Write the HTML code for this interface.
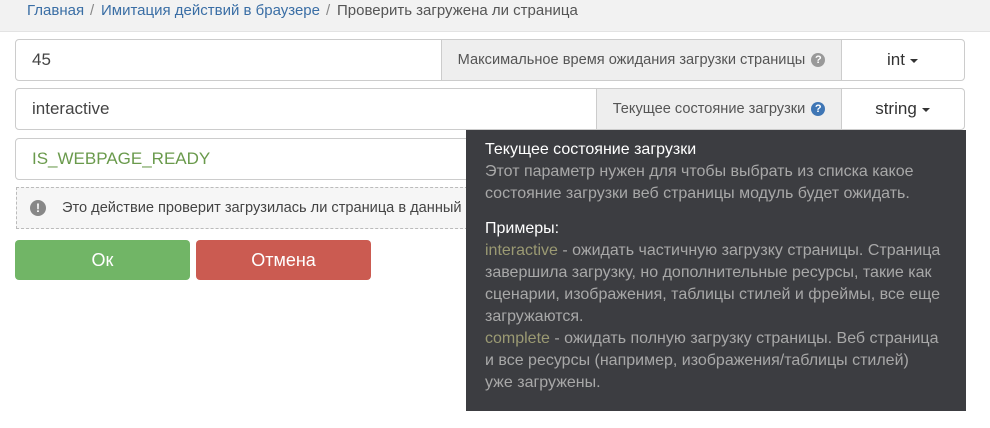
<!DOCTYPE html>
<html><head><meta charset="utf-8"><style>
body{margin:0;width:990px;height:428px;background:#fff;font-family:"Liberation Sans",Arial,sans-serif;position:relative;overflow:hidden;color:#333}
.bc{position:absolute;left:0;top:0;width:990px;height:31px;background:#f2f2f2;border-bottom:1px solid #e3e3e3;font-size:15px;line-height:22px}
.bc span{position:absolute;top:0}
.a{color:#3a6ea5}
.row{position:absolute;left:15px;width:948px;height:40px;border:1px solid #ccc;border-radius:4px;background:#fff}
.val{position:absolute;left:16px;top:0;line-height:40px;font-size:17px;color:#444}
.lab{position:absolute;top:0;height:40px;background:#eee;border-left:1px solid #ccc;border-right:1px solid #ccc;font-size:14.6px;line-height:40px;color:#555;text-align:center}
.typ{position:absolute;right:0;top:0;width:123px;height:40px;line-height:40px;text-align:center;font-size:17px;color:#333}
.caret{display:inline-block;width:0;height:0;border-left:4px solid transparent;border-right:4px solid transparent;border-top:4px solid #333;vertical-align:middle;margin-left:5px}
.q{display:inline-block;width:14px;height:14px;border-radius:50%;color:#fff;font-size:11px;line-height:14px;font-weight:bold;text-align:center;vertical-align:middle;margin-left:6px}
.info{position:absolute;left:16px;top:187px;width:460px;height:40px;border:1px dashed #bbb;background:#f6f6f6;font-size:14.6px;line-height:40px;color:#444;overflow:hidden}
.btn{position:absolute;top:240px;width:175px;height:40px;border-radius:4px;color:#fff;font-size:18px;line-height:40px;text-align:center}
.tip{position:absolute;left:466px;top:130px;width:500px;height:281px;background:#3c3d41;font-size:16px;line-height:22px;color:#a8a8a8;box-sizing:border-box;padding:9px 10px 0 19px}
.w{color:#fff}.o{color:#9b9a73}
</style></head><body>
<div class="bc"><span class="a" style="left:27px">Главная</span><span style="left:90px;color:#888">/</span><span class="a" style="left:101px">Имитация действий в браузере</span><span style="left:326px;color:#888">/</span><span style="left:337px;color:#555">Проверить загружена ли страница</span></div>
<div class="row" style="top:39px"><div class="val">45</div><div class="lab" style="left:425px;width:399px">Максимальное время ожидания загрузки страницы<span class="q" style="background:#999">?</span></div><div class="typ">int<span class="caret"></span></div></div>
<div class="row" style="top:88px"><div class="val">interactive</div><div class="lab" style="left:580px;width:244px">Текущее состояние загрузки<span class="q" style="background:#3f76b5">?</span></div><div class="typ">string<span class="caret"></span></div></div>
<div class="row" style="top:138px"><div class="val" style="color:#6a9a4c">IS_WEBPAGE_READY</div></div>
<div class="info"><span style="position:absolute;left:13px;top:12px;width:16px;height:16px;border-radius:50%;background:#888;color:#fff;font-size:12px;line-height:16px;text-align:center;font-weight:bold">!</span><span style="position:absolute;left:45px;white-space:nowrap">Это действие проверит загрузилась ли страница в данный м</span></div>
<div class="btn" style="left:15px;background:#71b566">Ок</div>
<div class="btn" style="left:196px;background:#cb5b51">Отмена</div>
<div class="tip"><div class="w">Текущее состояние загрузки</div>Этот параметр нужен для чтобы выбрать из списка какое<br>состояние загрузки веб страницы модуль будет ожидать.<div class="w" style="margin-top:13px">Примеры:</div><span class="o">interactive</span> - ожидать частичную загрузку страницы. Страница<br>завершила загрузку, но дополнительные ресурсы, такие как<br>сценарии, изображения, таблицы стилей и фреймы, все еще<br>загружаются.<br><span class="o">complete</span> - ожидать полную загрузку страницы. Веб страница<br>и все ресурсы (например, изображения/таблицы стилей)<br>уже загружены.</div>
</body></html>
